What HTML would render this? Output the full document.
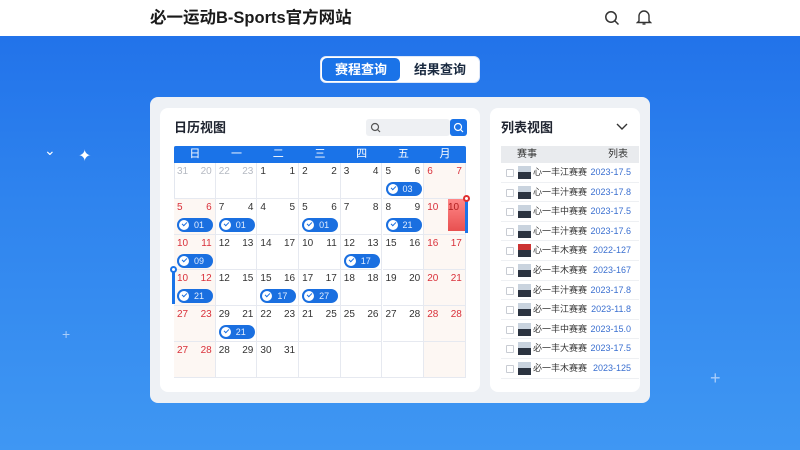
<!DOCTYPE html>
<html><head><meta charset="utf-8"><style>
*{margin:0;padding:0;box-sizing:border-box}
body{width:800px;height:450px;overflow:hidden;position:relative;font-family:"Liberation Sans","Noto Sans CJK SC",sans-serif;background:linear-gradient(180deg,#1f6fe9 0%,#2f84ee 45%,#3f97f3 100%)}
.hdr{position:absolute;left:0;top:0;width:800px;height:36px;background:#fff}
.title{position:absolute;left:150px;top:8px;font-size:16.5px;line-height:20px;font-weight:bold;color:#1a1a1a}
.tabs{position:absolute;left:320px;top:56px;width:160px;height:27px;background:#fff;border-radius:6px;border:1px solid #dfe8f8}
.t1{position:absolute;left:1px;top:1px;width:78px;height:23px;background:#1a73e8;border-radius:5px;color:#fff;font-size:13px;text-align:center;line-height:23px;font-weight:bold}
.t2{position:absolute;left:80px;top:1px;width:78px;height:23px;color:#1a2a40;font-size:13px;text-align:center;line-height:23px;font-weight:bold}
.card{position:absolute;left:150px;top:97px;width:500px;height:306px;background:#eef1f5;border-radius:8px}
.lp{position:absolute;left:160px;top:108px;width:320px;height:284px;background:#fff;border-radius:8px}
.rp{position:absolute;left:490px;top:108px;width:150px;height:284px;background:#fff;border-radius:8px}
.h{position:absolute;font-size:13px;line-height:16px;font-weight:bold;color:#1f2430}
.cal{position:absolute;left:174px;top:146px;width:292px;height:232px;border:1px solid #e3e7ef}
.wk{position:absolute;left:174px;top:146px;width:292px;height:17px;background:#1a73e8;border-radius:2px 2px 0 0}
.wk span{position:absolute;top:0;width:41.7px;text-align:center;color:#fff;font-size:11px;line-height:17px}
.c{position:absolute;width:41.7px;height:35.8px;border-right:1px solid #e6e9f0;border-bottom:1px solid #e6e9f0;font-size:10px;line-height:12px;color:#333}
.c.w{background:#fdf7f3}
.c .a{position:absolute;left:3px;top:3px}.c .b{position:absolute;right:3px;top:3px}
.c.r{color:#d9303a}.c.g{color:#b5b9c2}
.tag{position:absolute;left:3px;top:19px;width:36px;height:14px;background:#1a6fe0;border-radius:7px;color:#e3eeff;font-size:9px;line-height:14px;padding-left:17px}
.tag:before{content:"";position:absolute;left:2px;top:2px;width:10px;height:10px;border-radius:50%;background:#fff}
.tag:after{content:"";position:absolute;left:5px;top:4px;width:4px;height:2px;border-left:1.5px solid #1a6fe0;border-bottom:1.5px solid #1a6fe0;transform:rotate(-45deg)}
.lh{position:absolute;left:501px;top:146px;width:138px;height:17px;background:#e9ebee;font-size:10px;line-height:17px;color:#333}
.row{position:absolute;left:501px;width:138px;height:19.6px;border-bottom:1px solid #eef0f3;font-size:9px;line-height:19px}
.cb{position:absolute;left:5px;top:6px;width:8px;height:8px;border:1px solid #c8ccd3;border-radius:1px}
.av{position:absolute;left:17px;top:3px;width:13px;height:13px;background:linear-gradient(180deg,#c9d3de 0 45%,#2b3340 45%)}
.nm{position:absolute;left:32px;top:0;color:#333}
.dt{position:absolute;right:8px;top:0;color:#3a6fd0}
</style></head><body>
<div class="hdr"></div>
<div class="title">必一运动B-Sports官方网站</div>
<svg style="position:absolute;left:604px;top:10px" width="16" height="16" viewBox="0 0 16 16"><circle cx="7" cy="7" r="5.2" fill="none" stroke="#333" stroke-width="1.5"/><path d="M11 11l3.5 3.5" stroke="#333" stroke-width="1.5"/></svg>
<svg style="position:absolute;left:636px;top:9px" width="16" height="17" viewBox="0 0 16 17"><path d="M3 12V7a5 5 0 0110 0v5l1.5 1.5h-13z" fill="none" stroke="#333" stroke-width="1.4"/><path d="M6.5 15h3" stroke="#333" stroke-width="1.4"/></svg>
<div class="tabs"><div class="t1">赛程查询</div><div class="t2">结果查询</div></div>
<div style="position:absolute;left:44px;top:142px;color:#fff;font-size:14px">⌄</div>
<div style="position:absolute;left:78px;top:146px;color:#fff;font-size:16px">✦</div>
<div style="position:absolute;left:62px;top:326px;color:#a9cdfa;font-size:14px">+</div>
<div style="position:absolute;left:710px;top:368px;color:#a9cdfa;font-size:18px">+</div>
<div class="card"></div><div class="lp"></div><div class="rp"></div>
<div class="h" style="left:174px;top:120px">日历视图</div>
<div style="position:absolute;left:366px;top:119px;width:84px;height:17px;background:#eef0f3;border-radius:3px"></div>
<svg style="position:absolute;left:370px;top:122px" width="11" height="11"><circle cx="5" cy="5" r="3.5" fill="none" stroke="#555" stroke-width="1.2"/><path d="M7.5 7.5l2.5 2.5" stroke="#555" stroke-width="1.2"/></svg>
<div style="position:absolute;left:450px;top:119px;width:17px;height:17px;background:#1a73e8;border-radius:3px"></div>
<svg style="position:absolute;left:453px;top:122px" width="11" height="11"><circle cx="5" cy="5" r="3.5" fill="none" stroke="#fff" stroke-width="1.2"/><path d="M7.5 7.5l2.5 2.5" stroke="#fff" stroke-width="1.2"/></svg>
<div class="cal"></div>
<div class="wk"><span style="left:0">日</span><span style="left:41.7px">一</span><span style="left:83.4px">二</span><span style="left:125.1px">三</span><span style="left:166.8px">四</span><span style="left:208.5px">五</span><span style="left:250.2px">月</span></div>
<div id="g"></div>
<div style="position:absolute;left:448px;top:199px;width:18px;height:32px;background:linear-gradient(#f88,#e85050)"></div>
<div style="position:absolute;left:448px;top:202px;font-size:10px;line-height:12px;color:#b02020">10</div>
<div style="position:absolute;left:465px;top:199px;width:3px;height:34px;background:#1a73e8"></div>
<div style="position:absolute;left:463px;top:195px;width:7px;height:7px;border:2px solid #e03030;border-radius:50%;background:#fff"></div>
<div style="position:absolute;left:172px;top:270px;width:3px;height:34px;background:#1a73e8"></div>
<div style="position:absolute;left:170px;top:266px;width:7px;height:7px;border:2px solid #1a73e8;border-radius:50%;background:#fff"></div>
<div class="h" style="left:501px;top:120px">列表视图</div>
<svg style="position:absolute;left:616px;top:123px" width="12" height="8"><path d="M1 1l5 5 5-5" fill="none" stroke="#333" stroke-width="1.4"/></svg>
<div class="lh"><span style="position:absolute;left:16px;top:0">赛事</span><span style="position:absolute;left:107px;top:0">列表</span></div>
<div id="l"></div>
<script>
var D=[[["31","20","g"],["22","23","g"],["1","1"],["2","2"],["3","4"],["5","6","","03"],["6","7","rw"]],
[["5","6","rw","01"],["7","4","","01"],["4","5"],["5","6","","01"],["7","8"],["8","9","","21"],["10","","rw"]],
[["10","11","rw","09"],["12","13"],["14","17"],["10","11"],["12","13","","17"],["15","16"],["16","17","rw"]],
[["10","12","rw","21"],["12","15"],["15","16","","17"],["17","17","","27"],["18","18"],["19","20"],["20","21","rw"]],
[["27","23","rw"],["29","21","","21"],["22","23"],["21","25"],["25","26"],["27","28"],["28","28","rw"]],
[["27","28","rw"],["28","29"],["30","31"],["",""],["",""],["",""],["","","w"]]];
var h="";D.forEach(function(r,i){r.forEach(function(c,j){var cl=(c[2]||"").replace("rw","r w");if(j==0&&i>0)cl+=" w";h+='<div class="c '+cl+'" style="left:'+(174+j*41.7)+'px;top:'+(163+i*35.8)+'px"><span class="a">'+c[0]+'</span><span class="b">'+c[1]+'</span>'+(c[3]?'<div class="tag">'+c[3]+'</div>':'')+'</div>'})});
document.getElementById("g").innerHTML=h;
var L=[["心一丰江赛赛","2023-17.5"],["心一丰汁赛赛","2023-17.8"],["心一丰中赛赛","2023-17.5"],["心一丰汁赛赛","2023-17.6"],["心一丰木赛赛","2022-127"],["必一丰木赛赛","2023-167"],["必一丰汁赛赛","2023-17.8"],["必一丰江赛赛","2023-11.8"],["必一丰中赛赛","2023-15.0"],["必一丰大赛赛","2023-17.5"],["必一丰木赛赛","2023-125"]];
h="";L.forEach(function(x,i){h+='<div class="row" style="top:'+(163+i*19.6)+'px"><div class="cb"></div><div class="av"'+(i==4?' style="background:linear-gradient(180deg,#c33 0 45%,#2b3340 45%)"':'')+'></div><span class="nm">'+x[0]+'</span><span class="dt">'+x[1]+'</span></div>'});
document.getElementById("l").innerHTML=h;
</script>
</body></html>
